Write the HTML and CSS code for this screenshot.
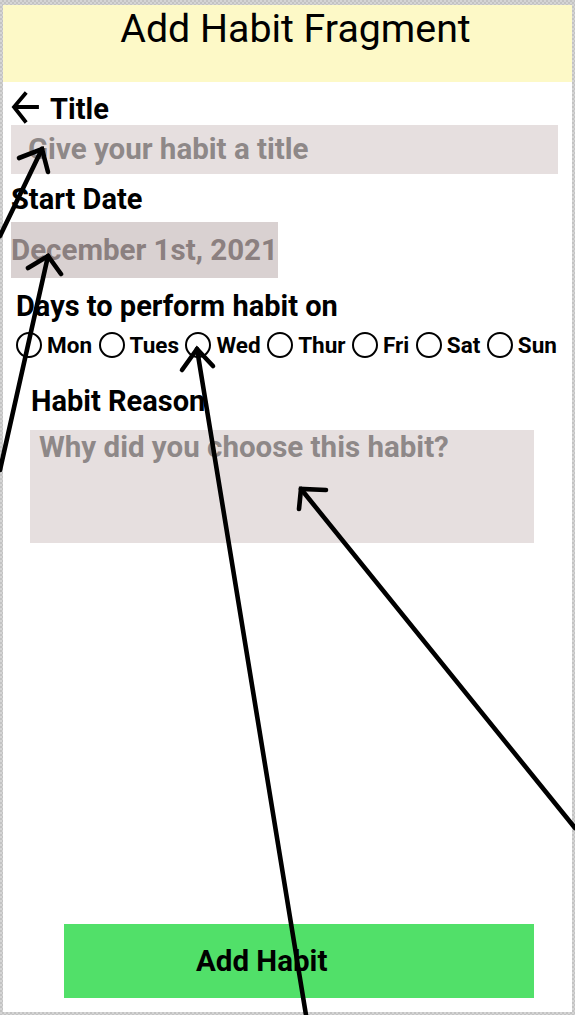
FILE: index.html
```html
<!DOCTYPE html>
<html>
<head>
<meta charset="utf-8">
<link rel="stylesheet" href="styles.css">
</head>
<body>
<div class="frame">
  <header class="appbar">Add Habit Fragment</header>
  <main class="form">
    <div class="title-row">
      <svg class="back" width="28" height="34" viewBox="0 0 28 34">
        <path d="M26 16 H4 M14 3 L3 16 L14 30" fill="none" stroke="#000" stroke-width="3.8" stroke-linecap="square" stroke-linejoin="miter"/>
      </svg>
      <span class="label">Title</span>
    </div>
    <div class="input title-input">Give your habit a title</div>
    <div class="label start-label">Start Date</div>
    <div class="date-box">December 1st, 2021</div>
    <div class="label days-label">Days to perform habit on</div>
    <div class="days">
      <span class="day"><span class="radio"></span>Mon</span>
      <span class="day"><span class="radio"></span>Tues</span>
      <span class="day"><span class="radio"></span>Wed</span>
      <span class="day"><span class="radio"></span>Thur</span>
      <span class="day"><span class="radio"></span>Fri</span>
      <span class="day"><span class="radio"></span>Sat</span>
      <span class="day"><span class="radio"></span>Sun</span>
    </div>
    <div class="label reason-label">Habit Reason</div>
    <div class="reason-box">Why did you choose this habit?</div>
    <div class="spacer"></div>
    <div class="button">Add Habit</div>
  </main>
</div>
<svg class="annotations" width="575" height="1015" viewBox="0 0 575 1015">
  <g fill="none" stroke="#000" stroke-width="4.6" stroke-linecap="round" stroke-linejoin="miter">
    <line x1="0" y1="236" x2="42" y2="149"/>
    <polyline points="19,158 42,149 48,172"/>
    <line x1="0" y1="470" x2="48" y2="256"/>
    <polyline points="28,268 48,256 61,274"/>
    <line x1="197" y1="349" x2="306" y2="1015"/>
    <polyline points="182,370 197,349 213,366"/>
    <line x1="301" y1="489" x2="575" y2="828"/>
    <polyline points="326,490 301,489 299,509"/>
  </g>
</svg>
</body>
</html>
```
FILE: styles.css
```css
html, body {
  margin: 0;
  padding: 0;
}
body {
  width: 575px;
  height: 1015px;
  overflow: hidden;
  position: relative;
  background: repeating-conic-gradient(#c3c3c3 0 25%, #d5d5d5 0 50%) 0 0 / 4px 4px;
  font-family: Roboto, "Noto Sans", sans-serif;
  color: #000;
}
.frame {
  margin: 5px 3px 3px 3px;
  height: 1007px;
  background: #fff;
  display: flex;
  flex-direction: column;
}
.appbar {
  height: 76px;
  padding-top: 1px;
  background: #fdf9c7;
  font-size: 39.3px;
  line-height: 46px;
  text-align: center;
  padding-left: 16px;
  box-sizing: content-box;
}
.form {
  flex: 1;
  display: flex;
  flex-direction: column;
  align-items: flex-start;
  font-weight: 700;
}
.label {
  font-size: 29px;
  line-height: 30px;
  white-space: nowrap;
}
.title-row {
  display: flex;
  align-items: center;
  height: 30px;
  margin-top: 12px;
  padding-left: 8px;
  gap: 11px;
}
.back {
  display: block;
  margin-top: -2px;
}
.input {
  margin-top: 1px;
  margin-left: 8px;
  width: 547px;
  height: 49px;
  background: #e6dfdf;
  color: #8e8888;
  font-size: 29.5px;
  line-height: 49px;
  padding-left: 17px;
  box-sizing: border-box;
}
.start-label {
  margin-top: 10px;
  margin-left: 8px;
}
.date-box {
  margin-top: 8px;
  margin-left: 8px;
  width: 267px;
  height: 56px;
  background: #d9d1d1;
  color: #8b8080;
  font-size: 29.5px;
  line-height: 56px;
  white-space: nowrap;
}
.days-label {
  margin-top: 13px;
  margin-left: 13px;
}
.days {
  margin-top: 11px;
  margin-left: 13px;
  height: 26px;
  display: flex;
  gap: 6.5px;
}
.day {
  display: flex;
  align-items: center;
  gap: 5px;
  font-size: 22.5px;
  line-height: 26px;
}
.radio {
  width: 26px;
  height: 26px;
  border: 2px solid #000;
  border-radius: 50%;
  box-sizing: border-box;
}
.reason-label {
  margin-top: 28px;
  margin-left: 28px;
}
.reason-box {
  margin-top: 14px;
  margin-left: 27px;
  width: 504px;
  height: 113px;
  background: #e6dfdf;
  color: #8e8888;
  font-size: 29.5px;
  line-height: 34px;
  padding-left: 9px;
  box-sizing: border-box;
}
.spacer {
  flex: 1;
}
.button {
  margin-left: 61px;
  margin-bottom: 14px;
  width: 470px;
  height: 74px;
  background: #51e069;
  font-size: 29.5px;
  line-height: 74px;
  padding-left: 132px;
  box-sizing: border-box;
}
.annotations {
  position: absolute;
  left: 0;
  top: 0;
  pointer-events: none;
}
```
